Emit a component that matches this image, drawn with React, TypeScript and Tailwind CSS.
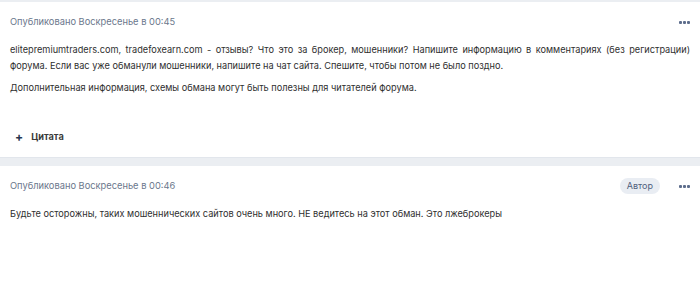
import React from 'react';

const Dots: React.FC = () => (
  <button className="flex items-center gap-[1px] h-4 px-0">
    <span className="size-[3px] rounded-[1px] bg-[#5d6d8c]"></span>
    <span className="size-[3px] rounded-[1px] bg-[#5d6d8c]"></span>
    <span className="size-[3px] rounded-[1px] bg-[#5d6d8c]"></span>
  </button>
);

interface PostProps {
  time: string;
  author?: boolean;
  children: React.ReactNode;
  quote?: boolean;
}

const Post: React.FC<PostProps> = ({ time, author, children, quote }) => (
  <article className="bg-white px-[10px]">
    <div className="h-10 flex items-center justify-between">
      <span className="text-[9.3px] text-[#6b778c]">Опубликовано {time}</span>
      <div className="flex items-center gap-[19px]">
        {author && (
          <span className="h-4 px-[7px] rounded-full bg-[#e9edf3] text-[9px] leading-4 text-[#4f5f7e]">Автор</span>
        )}
        <Dots />
      </div>
    </div>
    <div className="text-[9.2px] leading-4 text-[#2f2f2f] text-justify">{children}</div>
    {quote && (
      <div className="mt-[21px] h-10 flex items-center gap-[8px] pl-[5px]">
        <span className="text-[12px] font-bold leading-none text-[#26344f]">+</span>
        <span className="text-[9.2px] font-bold text-[#3a3a3a]">Цитата</span>
      </div>
    )}
  </article>
);

export default function App() {
  return (
    <div className="w-[700px] h-[296px] bg-white overflow-hidden" style={{ fontFamily: 'Inter, "Noto Sans", sans-serif' }}>
      <div className="h-[2px] bg-[#ebeef2]"></div>
      <Post time="Воскресенье в 00:45" quote>
        <p className="mb-[6px]">
          elitepremiumtraders.com, tradefoxearn.com - отзывы? Что это за брокер, мошенники? Напишите информацию в комментариях (без регистрации) форума. Если вас уже обманули мошенники, напишите на чат сайта. Спешите, чтобы потом не было поздно.
        </p>
        <p>Дополнительная информация, схемы обмана могут быть полезны для читателей форума.</p>
      </Post>
      <div className="h-[9px] bg-[#ebeef2] border-t border-[#e2e6ec]"></div>
      <Post time="Воскресенье в 00:46" author>
        <p>Будьте осторожны, таких мошеннических сайтов очень много. НЕ ведитесь на этот обман. Это лжеброкеры</p>
      </Post>
    </div>
  );
}
